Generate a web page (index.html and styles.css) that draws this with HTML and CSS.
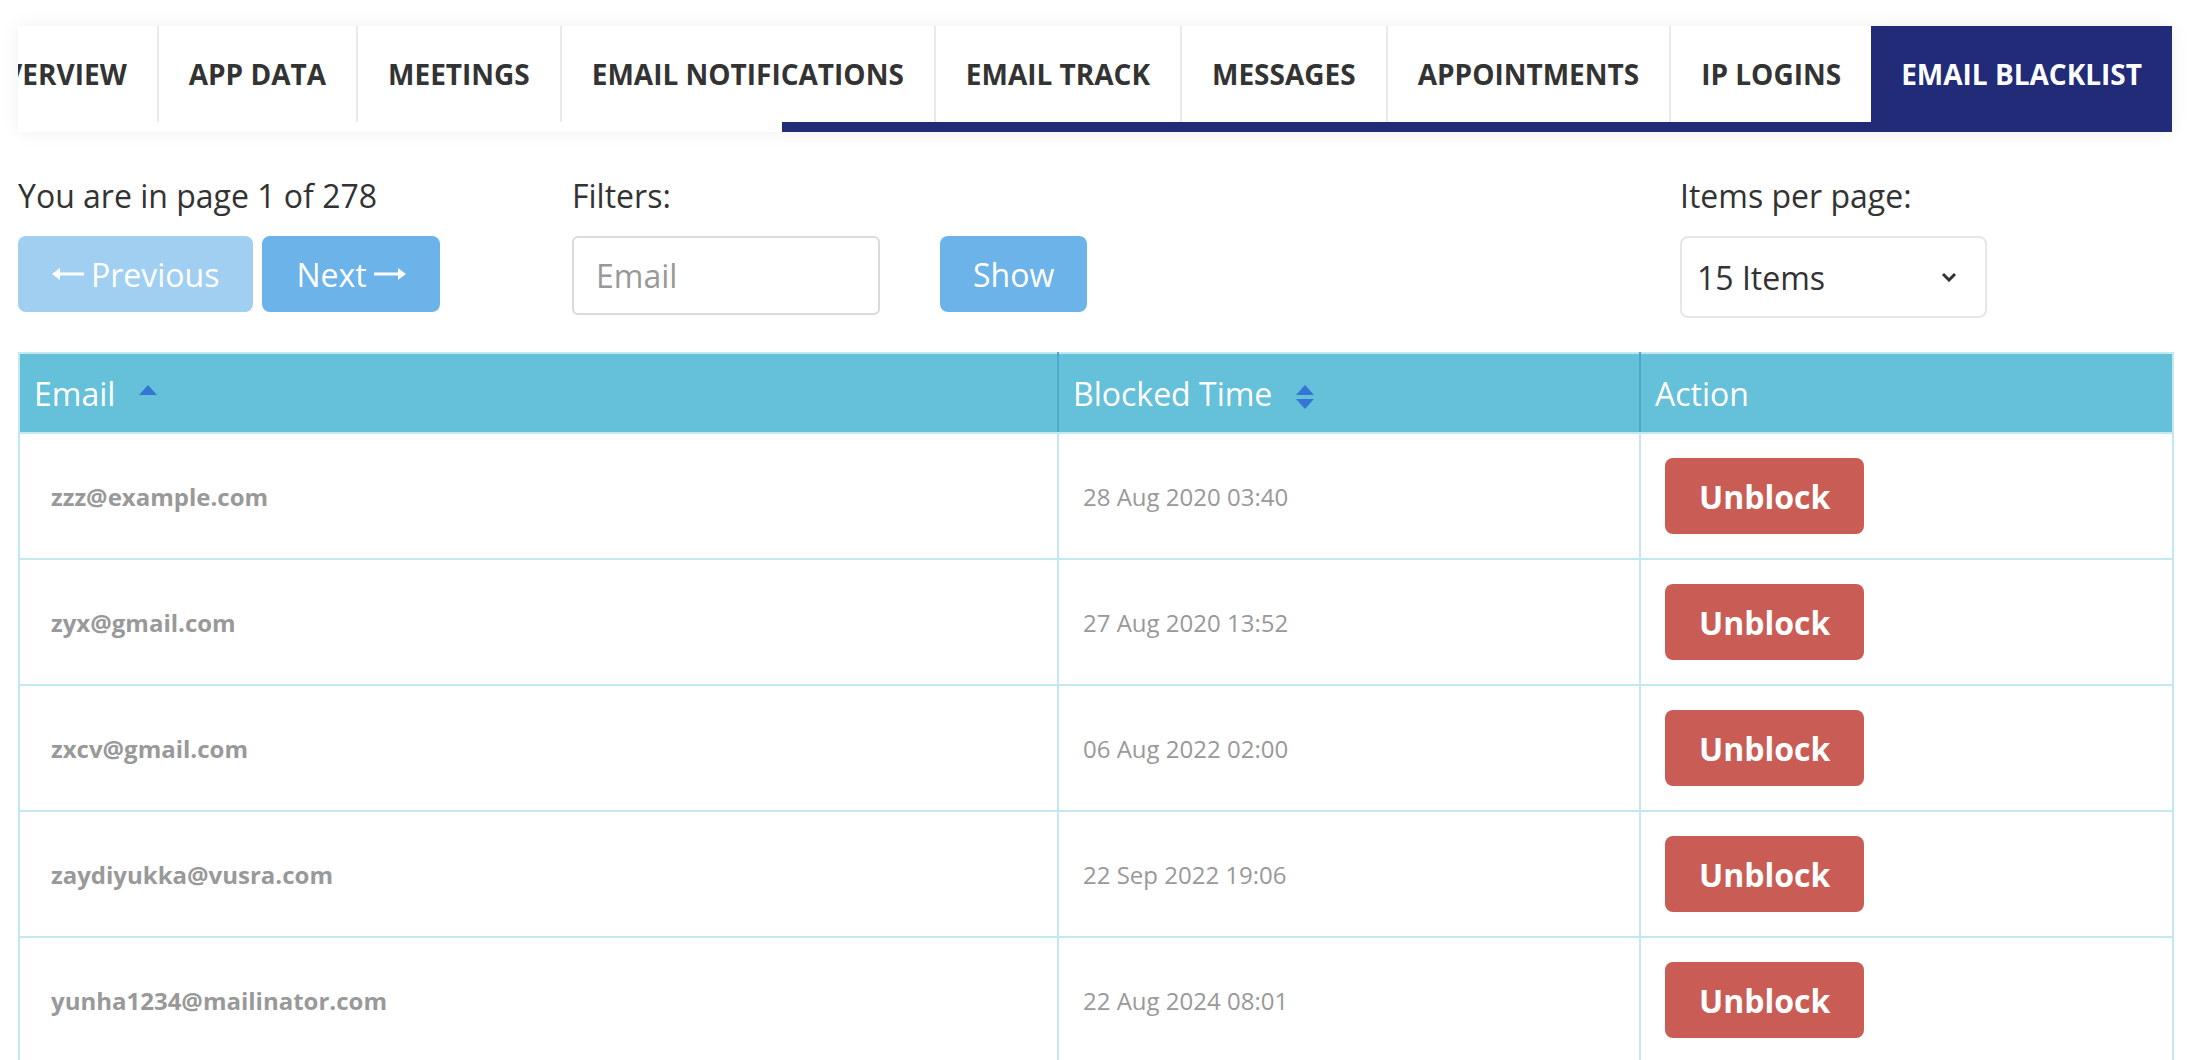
FILE: index.html
```html
<!DOCTYPE html>
<html lang="en">
<head>
    <meta charset="UTF-8">
    <title>Email Blacklist</title>
    <link rel="stylesheet" href="styles.css">
</head>
<body>
    <div class="page">
        <nav class="tabs">
            <div class="tab-strip">
                <a class="tab">Overview</a>
                <a class="tab">App Data</a>
                <a class="tab">Meetings</a>
                <a class="tab">Email Notifications</a>
                <a class="tab">Email Track</a>
                <a class="tab">Messages</a>
                <a class="tab">Appointments</a>
                <a class="tab">IP Logins</a>
                <a class="tab active">Email Blacklist</a>
            </div>
            <div class="tab-ink"></div>
        </nav>

        <div class="toolbar">
            <div class="pager">
                <div class="label">You are in page 1 of 278</div>
                <div class="btn-group">
                    <button class="btn btn-light">
                        <svg class="arrow" width="32" height="14" viewBox="0 0 32 14"><path d="M0 7 L8 1 V5.5 H32 V8.5 H8 V13 Z" fill="#fff"/></svg>
                        Previous
                    </button>
                    <button class="btn">
                        Next
                        <svg class="arrow" width="32" height="14" viewBox="0 0 32 14"><path d="M32 7 L24 1 V5.5 H0 V8.5 H24 V13 Z" fill="#fff"/></svg>
                    </button>
                </div>
            </div>

            <div class="filters">
                <div class="label">Filters:</div>
                <div class="filter-row">
                    <input class="field" type="text" placeholder="Email">
                    <button class="btn show">Show</button>
                </div>
            </div>

            <div class="per-page">
                <div class="label">Items per page:</div>
                <div class="select">
                    <span>15 Items</span>
                    <svg width="16" height="10" viewBox="0 0 16 10"><polyline points="2,2 8,8 14,2" fill="none" stroke="#333" stroke-width="3"/></svg>
                </div>
            </div>
        </div>

        <table class="grid">
            <colgroup>
                <col style="width: 1039px">
                <col style="width: 582px">
                <col style="width: 533px">
            </colgroup>
            <thead>
                <tr>
                    <th>Email
                        <svg class="sort" width="18" height="24" viewBox="0 0 18 24"><path d="M9 0 L18 10 H0 Z" fill="#3575d3"/></svg>
                    </th>
                    <th>Blocked Time
                        <svg class="sort" width="18" height="24" viewBox="0 0 18 24"><path d="M9 0 L18 10 H0 Z" fill="#3575d3"/><path d="M0 14 H18 L9 24 Z" fill="#3575d3"/></svg>
                    </th>
                    <th>Action</th>
                </tr>
            </thead>
            <tbody id="rows"></tbody>
        </table>
    </div>

    <script>
        const blocked = [
            ['zzz@example.com', '28 Aug 2020 03:40'],
            ['zyx@gmail.com', '27 Aug 2020 13:52'],
            ['zxcv@gmail.com', '06 Aug 2022 02:00'],
            ['zaydiyukka@vusra.com', '22 Sep 2022 19:06'],
            ['yunha1234@mailinator.com', '22 Aug 2024 08:01']
        ];

        const rows = document.getElementById('rows');
        blocked.forEach(([email, time]) => {
            const tr = document.createElement('tr');
            tr.innerHTML =
                '<td class="email">' + email + '</td>' +
                '<td class="time">' + time + '</td>' +
                '<td><button class="unblock">Unblock</button></td>';
            rows.appendChild(tr);
        });
    </script>
</body>
</html>
```

FILE: styles.css
```css
body {
    margin: 0;
    font-family: "Open Sans", "Liberation Sans", sans-serif;
    color: #333;
    background: #fff;
}
.page {
    padding: 26px 30px 0 18px;
}

/* tabs */
.tabs {
    background: #fff;
    box-shadow: 0 0 18px rgba(0,0,0,0.07);
}
.tab-strip {
    display: flex;
    justify-content: flex-end;
    overflow: hidden;
}
.tab {
    flex-shrink: 0;
    height: 96px;
    display: flex;
    align-items: center;
    padding: 0 30px;
    border-left: 2px solid #e6eaee;
    font-size: 28px;
    font-weight: 700;
    text-transform: uppercase;
    color: #333;
    white-space: nowrap;
}
.tab.active {
    background: #212b78;
    color: #fff;
    border-left: none;
}
.tab-ink {
    height: 10px;
    margin-left: 764px;
    background: #212b78;
}

/* toolbar */
.toolbar {
    display: grid;
    grid-template-columns: 554px 1108px auto;
    margin-top: 40px;
}
.label {
    font-size: 32px;
    line-height: 48px;
    margin-bottom: 16px;
}
.btn-group {
    display: flex;
    gap: 9px;
}
.btn {
    height: 76px;
    display: inline-flex;
    align-items: center;
    gap: 7px;
    padding: 0 34px;
    border: none;
    border-radius: 8px;
    background: #6bb3e9;
    color: #fff;
    font-family: inherit;
    font-size: 32px;
}
.btn-light {
    background: #a1cff2;
}
.btn.show {
    padding: 0 33px;
}
.filter-row {
    display: flex;
    gap: 60px;
}
.field {
    width: 308px;
    height: 79px;
    box-sizing: border-box;
    padding: 0 22px;
    border: 2px solid #dadada;
    border-radius: 6px;
    font-family: inherit;
    font-size: 32px;
    color: #333;
}
.field::placeholder {
    color: #999;
}
.select {
    width: 307px;
    height: 82px;
    box-sizing: border-box;
    margin-top: 1px;
    display: flex;
    align-items: center;
    justify-content: space-between;
    padding: 0 28px 0 15px;
    border: 2px solid #e6e6e6;
    border-radius: 8px;
    font-size: 32px;
}

/* table */
.grid {
    margin-top: 34px;
    width: 2154px;
    border-collapse: collapse;
    table-layout: fixed;
    border: 2px solid #c4e8f0;
}
.grid th {
    height: 78px;
    padding: 0 14px;
    background: #65c0da;
    color: #fff;
    font-size: 32px;
    font-weight: 400;
    text-align: left;
    border-bottom: 2px solid #c4e8f0;
}
.grid th + th {
    border-left: 2px solid #4fa8c7;
}
.sort {
    margin-left: 15px;
    vertical-align: -3px;
}
.grid td {
    height: 124px;
    padding: 0 24px;
    border: 2px solid #c4e8f0;
    font-size: 24px;
    color: #999;
}
.grid td.email {
    padding-left: 31px;
    font-weight: 700;
}
.unblock {
    height: 76px;
    padding: 0 34px;
    border: none;
    border-radius: 8px;
    background: #c95d56;
    color: #fff;
    font-family: inherit;
    font-size: 32px;
    font-weight: 700;
}
```
